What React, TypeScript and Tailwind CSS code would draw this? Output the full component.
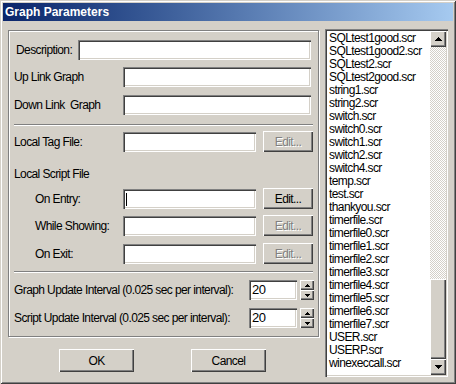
const items = [
	"SQLtest1good.scr",
	"SQLtest1good2.scr",
	"SQLtest2.scr",
	"SQLtest2good.scr",
	"string1.scr",
	"string2.scr",
	"switch.scr",
	"switch0.scr",
	"switch1.scr",
	"switch2.scr",
	"switch4.scr",
	"temp.scr",
	"test.scr",
	"thankyou.scr",
	"timerfile.scr",
	"timerfile0.scr",
	"timerfile1.scr",
	"timerfile2.scr",
	"timerfile3.scr",
	"timerfile4.scr",
	"timerfile5.scr",
	"timerfile6.scr",
	"timerfile7.scr",
	"USER.scr",
	"USERP.scr",
	"winexeccall.scr",
];

const sunken =
	"bg-white shadow-[inset_1px_1px_0_#808080,inset_2px_2px_0_#404040,inset_-1px_-1px_0_#ffffff,inset_-2px_-2px_0_#d4d0c8]";
const raised =
	"bg-[#d4d0c8] shadow-[inset_1px_1px_0_#ffffff,inset_-1px_-1px_0_#404040,inset_-2px_-2px_0_#808080]";

const Field = ({ w, caret }: { w: string; caret?: boolean }) => (
	<div className={`${sunken} ${w} h-[20px] relative`}>
		{caret && <div className="absolute left-[3px] top-[4px] w-px h-[13px] bg-black" />}
	</div>
);

const EditButton = ({ disabled }: { disabled?: boolean }) => (
	<div
		className={`${raised} ml-[7px] w-[50px] h-[21px] flex items-center justify-center ${
			disabled ? "text-[#808080] [text-shadow:1px_1px_0_#ffffff]" : "text-black"
		}`}
	>
		Edit...
	</div>
);

const Arrow = ({ down, size }: { down?: boolean; size: "sm" | "md" }) => {
	const w = size === "md" ? 7 : 5;
	const h = size === "md" ? 4 : 3;
	return (
		<svg width={w} height={h} viewBox={`0 0 ${w} ${h}`} shapeRendering="crispEdges">
			<polygon
				points={down ? `0,0 ${w},0 ${w / 2},${h}` : `0,${h} ${w},${h} ${w / 2},0`}
				fill="#000"
			/>
		</svg>
	);
};

const Spinner = () => (
	<div className="flex">
		<div className={`${sunken} w-[48px] h-[20px] flex items-center pl-[3px] text-[13px]`}>20</div>
		<div className="ml-[3px] w-[14px] h-[20px] flex flex-col">
			<div className={`${raised} h-[10px] flex items-center justify-center`}>
				<Arrow size="sm" />
			</div>
			<div className={`${raised} h-[10px] flex items-center justify-center`}>
				<Arrow size="sm" down />
			</div>
		</div>
	</div>
);

const Etched = () => <div className="h-[2px] border-t border-b border-t-[#808080] border-b-white" />;

export default function App() {
	return (
		<div className="w-[456px] h-[384px] bg-[#d4d0c8] p-[3px] flex flex-col font-['Liberation_Sans',Arial,sans-serif] text-[12px] tracking-[-0.6px] text-black shadow-[inset_1px_1px_0_#d4d0c8,inset_-1px_-1px_0_#404040,inset_2px_2px_0_#ffffff,inset_-2px_-2px_0_#808080]">
			<div className="h-[18px] flex items-center pl-[2px] bg-gradient-to-r from-[#0a246a] to-[#a6caf0] text-white font-bold tracking-normal">
				Graph Parameters
			</div>

			<div className="flex items-start">
				<div className="ml-[5px] mt-[9px] flex flex-col">
					<div className="w-[311px] h-[307px] border border-[#808080] shadow-[inset_1px_1px_0_#ffffff,1px_1px_0_#ffffff] pt-[9px] flex flex-col">
						<div className="h-[20px] flex items-center pl-[7px]">
							<span className="w-[62px]">Description:</span>
							<Field w="w-[233px]" />
						</div>
						<div className="mt-[7px] h-[20px] flex items-center pl-[5px]">
							<span className="w-[109px]">Up Link Graph</span>
							<Field w="w-[188px]" />
						</div>
						<div className="mt-[8px] h-[20px] flex items-center pl-[5px]">
							<span className="w-[109px] whitespace-pre">Down Link  Graph</span>
							<Field w="w-[188px]" />
						</div>

						<div className="mt-[9px] px-[5px]">
							<Etched />
						</div>

						<div className="mt-[5px] h-[21px] flex items-center pl-[5px]">
							<span className="w-[109px]">Local Tag File:</span>
							<Field w="w-[133px]" />
							<EditButton disabled />
						</div>
						<div className="mt-[12px] h-[20px] flex items-center pl-[5px]">Local Script File</div>
						<div className="mt-[4px] h-[21px] flex items-center pl-[26px]">
							<span className="w-[88px]">On Entry:</span>
							<Field w="w-[133px]" caret />
							<EditButton />
						</div>
						<div className="mt-[6px] h-[21px] flex items-center pl-[26px]">
							<span className="w-[88px]">While Showing:</span>
							<Field w="w-[133px]" />
							<EditButton disabled />
						</div>
						<div className="mt-[7px] h-[21px] flex items-center pl-[26px]">
							<span className="w-[88px]">On Exit:</span>
							<Field w="w-[133px]" />
							<EditButton disabled />
						</div>

						<div className="mt-[7px] px-[5px]">
							<Etched />
						</div>

						<div className="mt-[7px] h-[20px] flex items-center pl-[5px]">
							<span className="w-[235px]">Graph Update Interval (0.025 sec per interval):</span>
							<Spinner />
						</div>
						<div className="mt-[8px] h-[20px] flex items-center pl-[5px]">
							<span className="w-[235px]">Script Update Interval (0.025 sec per interval):</span>
							<Spinner />
						</div>
					</div>

					<div className="mt-[12px] flex">
						<div className={`${raised} ml-[51px] w-[75px] h-[23px] flex items-center justify-center`}>OK</div>
						<div className={`${raised} ml-[57px] w-[75px] h-[23px] flex items-center justify-center`}>Cancel</div>
					</div>
				</div>

				<div className={`${sunken} ml-[6px] mt-[8px] w-[123px] h-[348px] p-[2px] flex`}>
					<div className="flex-1 pl-[2px] pt-[1px] overflow-hidden">
						{items.map((item) => (
							<div key={item} className="h-[13px] leading-[13px] whitespace-nowrap">
								{item}
							</div>
						))}
					</div>
					<div className="w-[16px] flex flex-col">
						<div className={`${raised} h-[16px] flex items-center justify-center`}>
							<Arrow size="md" />
						</div>
						<div className="flex-1 bg-[repeating-conic-gradient(#d4d0c8_0%_25%,#ffffff_0%_50%)] bg-[length:2px_2px]" />
						<div className={`${raised} h-[80px]`} />
						<div className={`${raised} h-[16px] flex items-center justify-center`}>
							<Arrow size="md" down />
						</div>
					</div>
				</div>
			</div>
		</div>
	);
}
